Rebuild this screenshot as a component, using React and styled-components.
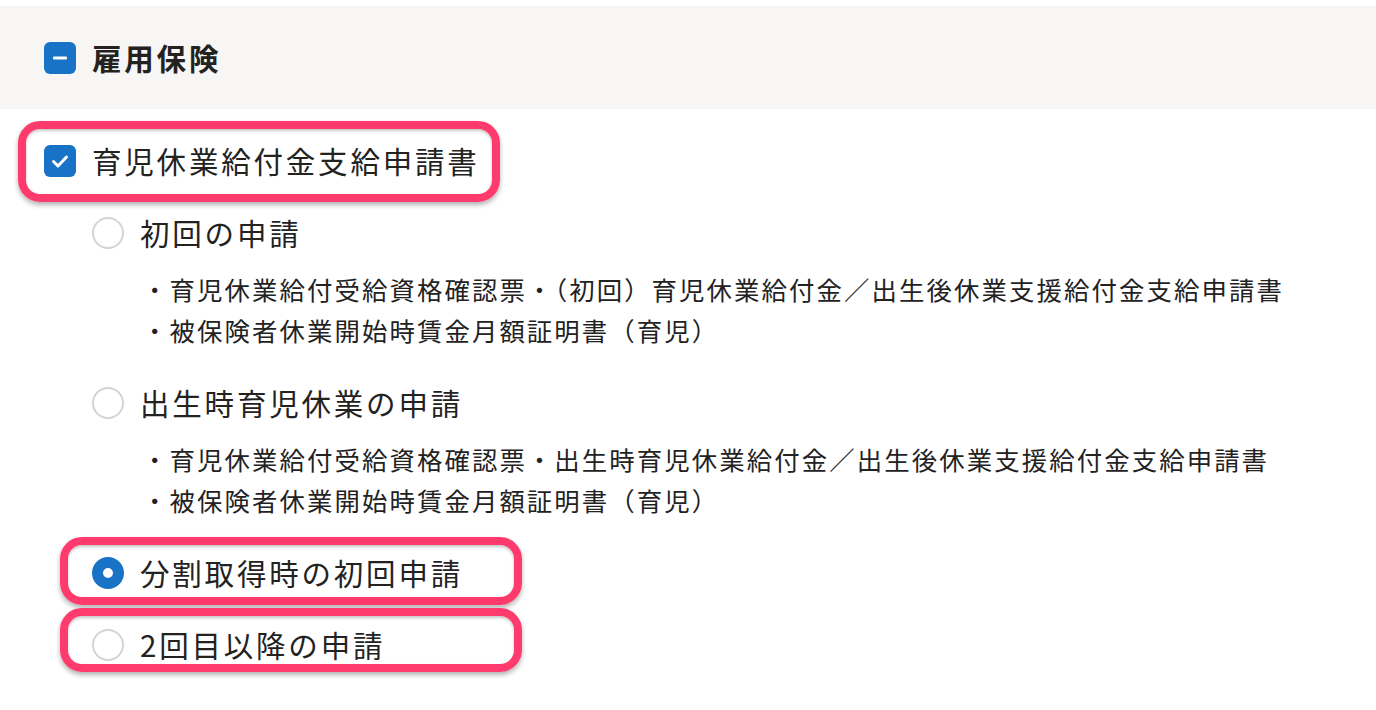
import React from "react";
import styled, { createGlobalStyle } from "styled-components";

const GlobalStyle = createGlobalStyle`
    body {
        margin: 0;
        background: #ffffff;
        color: #23221f;
        font-family: "Noto Sans CJK JP", "Noto Sans", sans-serif;
    }
`;

const Page = styled.div`
    padding-top: 6px;
`;

const SectionHeader = styled.div`
    height: 103px;
    display: flex;
    align-items: center;
    gap: 16px;
    padding-left: 44px;
    background: #f7f6f4;
`;

const SectionTitle = styled.span`
    font-size: 29.5px;
    font-weight: 700;
    letter-spacing: 2.8px;
    line-height: 1;
`;

const Body = styled.div`
    padding: 16px 0 0 44px;
`;

const Row = styled.label`
    position: relative;
    height: 72px;
    display: flex;
    align-items: center;
    gap: 16px;
`;

const Label = styled.span`
    font-size: 29.5px;
    letter-spacing: 2.8px;
    line-height: 1;
    white-space: nowrap;
`;

const Box = styled.span`
    width: 32px;
    height: 32px;
    flex: none;
    border-radius: 6px;
    background: #1873c6;
    display: flex;
    align-items: center;
    justify-content: center;
`;

const Radio = styled.span`
    width: 32px;
    height: 32px;
    flex: none;
    box-sizing: border-box;
    border-radius: 50%;
    background: #ffffff;
    border: ${(p) => (p.$checked ? "11px solid #1873c6" : "2px solid #d6d3d0")};
`;

const Options = styled.div`
    padding-left: 48px;
`;

const Notes = styled.ul`
    margin: 0 0 16px 50px;
    padding: 0;
    list-style: none;
`;

const Note = styled.li`
    font-size: 25.4px;
    letter-spacing: 2.1px;
    line-height: 41px;
    white-space: nowrap;
`;

const Highlight = styled.span`
    position: absolute;
    top: ${(p) => p.$top}px;
    bottom: ${(p) => p.$bottom}px;
    left: ${(p) => p.$left}px;
    width: ${(p) => p.$width}px;
    box-sizing: border-box;
    border: 8px solid #ff3a6d;
    border-radius: 22px;
    box-shadow: 0 3px 5px rgba(0, 0, 0, 0.3), inset 0 2px 3px rgba(0, 0, 0, 0.22);
    pointer-events: none;
`;

const MinusBox = () => (
    <Box>
        <svg width="16" height="4" viewBox="0 0 16 4">
            <rect x="1" y="0.5" width="14" height="3" rx="1" fill="#fff" />
        </svg>
    </Box>
);

const CheckBox = () => (
    <Box>
        <svg width="32" height="32" viewBox="0 0 32 32">
            <polyline
                points="9.5,16.5 14,21 22.5,12"
                fill="none"
                stroke="#fff"
                strokeWidth="3"
                strokeLinecap="round"
                strokeLinejoin="round"
            />
        </svg>
    </Box>
);

const options = [
    {
        label: "初回の申請",
        notes: [
            "・育児休業給付受給資格確認票・（初回）育児休業給付金／出生後休業支援給付金支給申請書",
            "・被保険者休業開始時賃金月額証明書（育児）",
        ],
    },
    {
        label: "出生時育児休業の申請",
        notes: [
            "・育児休業給付受給資格確認票・出生時育児休業給付金／出生後休業支援給付金支給申請書",
            "・被保険者休業開始時賃金月額証明書（育児）",
        ],
    },
    { label: "分割取得時の初回申請", checked: true, mark: { top: 0, bottom: 4 } },
    { label: "2回目以降の申請", mark: { top: -1, bottom: 9 } },
];

const App = () => {
    return (
        <Page>
            <GlobalStyle />
            <SectionHeader>
                <MinusBox />
                <SectionTitle>雇用保険</SectionTitle>
            </SectionHeader>
            <Body>
                <Row>
                    <CheckBox />
                    <Label>育児休業給付金支給申請書</Label>
                    <Highlight $top={-4} $bottom={-5} $left={-26} $width={482} />
                </Row>
                <Options>
                    {options.map((o) => (
                        <div key={o.label}>
                            <Row>
                                <Radio $checked={o.checked} />
                                <Label>{o.label}</Label>
                                {o.mark && (
                                    <Highlight
                                        $top={o.mark.top}
                                        $bottom={o.mark.bottom}
                                        $left={-32}
                                        $width={462}
                                    />
                                )}
                            </Row>
                            {o.notes && (
                                <Notes>
                                    {o.notes.map((n) => (
                                        <Note key={n}>{n}</Note>
                                    ))}
                                </Notes>
                            )}
                        </div>
                    ))}
                </Options>
            </Body>
        </Page>
    );
};

export default App;
